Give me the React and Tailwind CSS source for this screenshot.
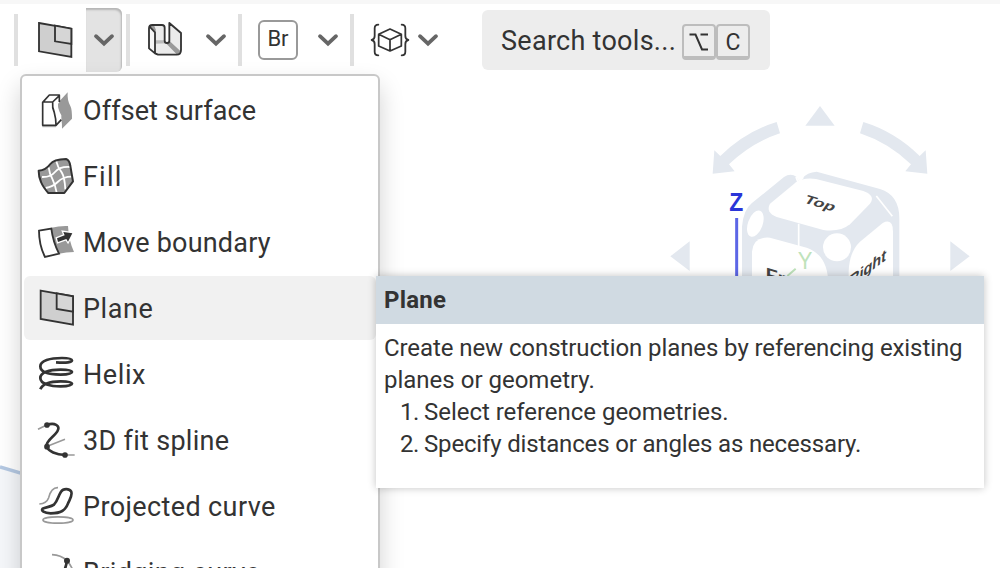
import React from "react";

const INK = "#333333";

function Chevron() {
  return (
    <svg className="h-5 w-6 shrink-0" viewBox="0 0 24 20" fill="none">
      <path d="M4 6.2 L12 13.6 L20 6.2" stroke="#666" strokeWidth="3.8" strokeLinecap="round" strokeLinejoin="miter" />
    </svg>
  );
}

function Divider() {
  return <div className="h-[52px] w-1 shrink-0 bg-[#e0e0e0]" />;
}

function PlaneIcon({ className, viewBox }) {
  return (
    <svg className={className} viewBox={viewBox} stroke={INK} strokeWidth="5.5">
      <path d="M117 69 L214 86 V171 L117 154 Z" fill="#cfcfcf" />
      <path d="M165 77 V124 L214 132 V86 Z" fill="#d6d6d6" />
    </svg>
  );
}

function ExtrudeIcon() {
  return (
    <svg className="h-10 w-9" viewBox="441 60 108 120" strokeLinejoin="round">
      <path d="M447 79 L465 98 V161 L447 145 Z" fill="#f5f5f5" />
      <path d="M452 76 H494 V122 Q494 129 501 129 Q508 129 508 122 V70 L543 99 V150 Q543 164 530 164 H470 Q465 162 465 155 V98 Z" fill="#ebebeb" />
      <path d="M449 76 L467 97 L467 88 L462 76 Z" fill="#999" />
      <path d="M467 121 H494 Q495 128 501 130 L467 131 Z" fill="#bbb" />
      <path d="M497 129 H508 V122 L541 153 Q538 162 530 163 Z" fill="#999" />
      <path
        d="M447 85 Q447 75 457 75 H486 Q494 75 494 83 V122 Q494 129 501 129 Q508 129 508 122 V69 L543 99 V150 Q543 164 530 164 H474 L465 160 L447 145 Z M449 80 L465 97 V158"
        fill="none" stroke={INK} strokeWidth="5.5"
      />
    </svg>
  );
}

function BracedCubeIcon() {
  return (
    <svg className="h-10 w-10" viewBox="420 60 120 120" fill="none" stroke={INK} strokeLinejoin="round" strokeLinecap="round">
      <path d="M445 74 Q434 74 434 85 V108 Q434 118 425 120 Q434 122 434 132 V155 Q434 166 445 166" strokeWidth="5.4" />
      <path d="M515 74 Q526 74 526 85 V108 Q526 118 535 120 Q526 122 526 132 V155 Q526 166 515 166" strokeWidth="5.4" />
      <path d="M480 87 L514 103 V138 L480 153 L446 138 V103 Z M446 103 L480 119 L514 103 M480 119 V153" strokeWidth="5.2" />
    </svg>
  );
}

const ICON = "h-12 w-10 shrink-0";

function OffsetSurfaceIcon() {
  return (
    <svg className={ICON} viewBox="48 18 120 144" fill="none" strokeLinejoin="round">
      <path d="M143 37 Q141 62 152 80 Q156 88 156 116 L126 146 Q127 118 118 100 Q112 88 114 68 Z" fill="#999" />
      <path d="M68 67 L88 45 H118 V66 L114 72 Q113 88 124 106 V119 L108 136 H68 Z" fill="#fff" />
      <path d="M118 66 V45 H88 L68 67 V136 H108 L124 119 M68 66 H98 L118 47 M98 66 Q96 82 103 98 Q108 115 108 136" stroke={INK} strokeWidth="5" />
      <path d="M67 140 H108" stroke="#999" strokeWidth="3" />
    </svg>
  );
}

function FillIcon() {
  return (
    <svg className={ICON} viewBox="48 216 120 144" fill="none" strokeLinejoin="round">
      <path d="M56 272 Q77 271 91 252 Q101 238 138 237 Q149 241 151 258 L159 304 L133 339 H85 Q69 321 63 306 Q56 290 56 272 Z" fill="#999" />
      <path d="M86 262 Q88 280 98 299 Q106 316 110 338 M109 244 Q113 262 125 277 Q134 292 136 328 M66 291 Q92 292 105 276 Q119 259 150 261 M77 324 Q99 320 113 306 Q129 290 155 290" stroke="#fff" strokeWidth="5.5" />
      <path d="M56 272 Q77 271 91 252 Q101 238 138 237 Q149 241 151 258 L159 304 L133 339 H85 Q69 321 63 306 Q56 290 56 272 Z" stroke={INK} strokeWidth="6" />
    </svg>
  );
}

function MoveBoundaryIcon() {
  return (
    <svg className={ICON} viewBox="48 24 120 144" fill="none" strokeLinejoin="miter">
      <path d="M95 53 Q118 47 144 48 Q146 91 162 126 Q138 127 117 131 Q99 95 95 53 Z" fill="#999" />
      <path d="M57 62 L94 56 Q99 96 117 131 L75 141 Q57 105 57 62 Z" fill="#fff" stroke={INK} strokeWidth="5.5" />
      <path d="M111 85 L134 76 L130 66 L157 70 L144 95 L139 87 L114 96 Z" fill={INK} stroke="#fff" strokeWidth="8" />
      <path d="M111 85 L134 76 L130 66 L157 70 L144 95 L139 87 L114 96 Z" fill={INK} />
    </svg>
  );
}

function HelixIcon() {
  return (
    <svg className={ICON} viewBox="48 30 120 144" fill="none" stroke={INK} strokeWidth="8.2" strokeLinejoin="round">
      <path d="M108 67 Q156 70 156 61 Q155 54 126 54 C90 54 61 62 61 79 C61 98 92 104 122 104 Q156 103 156 96 Q155 89 122 89 C86 89 61 98 61 114 C61 132 92 139 122 139 Q156 138 156 131 Q155 124 122 124 C88 124 67 133 61 148" />
    </svg>
  );
}

function SplineIcon() {
  return (
    <svg className={ICON} viewBox="48 228 120 144" fill="none">
      <path d="M54 268 L80 255 M82 319 L135 298 M135 345 H164" stroke="#999" strokeWidth="4.8" />
      <path d="M80 255 C104 246 121 257 113 272 C106 288 78 300 79 320 C86 334 108 344 135 345" stroke={INK} strokeWidth="7.8" />
      <circle cx="81" cy="255" r="8.5" fill={INK} />
      <circle cx="81" cy="320" r="8.5" fill={INK} />
      <circle cx="135" cy="345" r="8.5" fill={INK} />
    </svg>
  );
}

function ProjectedCurveIcon() {
  return (
    <svg className={ICON} viewBox="108 96 120 144" fill="none">
      <path d="M118 162 Q140 160 146 143 Q154 112 174 113" stroke="#999" strokeWidth="5" />
      <ellipse cx="174" cy="210" rx="45" ry="9.5" stroke="#999" strokeWidth="5" />
      <path d="M183 125 C190 115 207 115 213 124 C219 133 211 145 205 158 C196 182 183 190 152 190 C132 189 122 182 128 176 C136 171 153 171 162 164 C173 153 175 137 183 125 Z" stroke={INK} strokeWidth="8" />
    </svg>
  );
}

function BridgingCurveIcon() {
  return (
    <svg className={ICON} viewBox="108 294 120 144" fill="none">
      <path d="M156 314 Q183 315 200 331 Q211 343 217 357" stroke="#999" strokeWidth="5" />
      <path d="M200 332 Q200 358 178 380" stroke={INK} strokeWidth="8" />
      <circle cx="201" cy="332" r="9" fill={INK} />
    </svg>
  );
}

const ITEMS = [
  { label: "Offset surface", Icon: OffsetSurfaceIcon, tracking: "tracking-[0.1px]" },
  { label: "Fill", Icon: FillIcon, tracking: "tracking-[1.2px]" },
  { label: "Move boundary", Icon: MoveBoundaryIcon, tracking: "tracking-[0.2px]" },
  { label: "Plane", Icon: null, active: true, tracking: "tracking-[0.55px]" },
  { label: "Helix", Icon: HelixIcon, tracking: "tracking-[0.6px]" },
  { label: "3D fit spline", Icon: SplineIcon, tracking: "tracking-[0.3px]" },
  { label: "Projected curve", Icon: ProjectedCurveIcon, tracking: "tracking-[0.38px]" },
  { label: "Bridging curve", Icon: BridgingCurveIcon, tracking: "tracking-[0.38px]" },
];

function MenuItem({ label, Icon, active, tracking }) {
  return (
    <li className={`flex h-16 shrink-0 items-center rounded-md pl-3 ${active ? "bg-[#f1f1f1]" : ""}`}>
      {Icon ? <Icon /> : <PlaneIcon className={ICON} viewBox="103 49 120 144" />}
      <span className={`ml-[7px] whitespace-nowrap pt-[2px] text-[27px] leading-none ${tracking}`}>{label}</span>
    </li>
  );
}

function ViewCube() {
  const tint = "#e3e8ef";
  return (
    <svg className="absolute left-[660px] top-[95px] h-[190px] w-[320px]" viewBox="0 0 960 570" fill="none">
      <g fill={tint}>
        <path d="M480 33 L524 92 H436 Z" />
        <path d="M31 484 L89 439 V528 Z" />
        <path d="M929 484 L871 439 V528 Z" />
        <path d="M350 81 L360 115 Q275 143 207 208 L224 229 L158 236 L163 166 L181 183 Q255 110 350 81 Z" />
        <path d="M610 81 L600 115 Q685 143 753 208 L736 229 L802 236 L797 166 L779 183 Q705 110 610 81 Z" />
        <path d="M246 570 V395 Q250 345 275 325 L372 246 Q392 233 410 246 L414 257 L428 250 Q440 232 470 230 L660 282 Q718 300 718 370 V570 Z" />
      </g>
      <path d="M408 246 L414 262 L430 247" stroke="#fff" strokeWidth="5" />
      <g fill="#fff">
        <path d="M408 262 Q430 247 468 252 L610 288 Q648 302 630 326 L570 388 Q540 412 490 405 L350 366 Q316 352 330 326 Z" />
        <ellipse cx="286" cy="386" rx="22" ry="41" transform="rotate(20 286 386)" />
        <circle cx="531" cy="457" r="42" />
        <path d="M276 570 V470 Q280 424 330 428 L440 458 Q505 480 505 570 Z" />
        <path d="M566 570 V530 Q568 470 600 440 L668 384 Q699 368 699 410 V570 Z" />
      </g>
      <path d="M416 386 V455 M649 303 L697 364" stroke="#fff" strokeWidth="5" />
      <path d="M382 543 L407 521" stroke="#bfe3bb" strokeWidth="6" />
      <g fontFamily="Liberation Sans, sans-serif">
        <text transform="matrix(1.14 0.34 -0.5 0.7 428 322)" fontSize="45" fontWeight="700" fill="#444">Top</text>
        <text transform="matrix(1.1 0.32 0 1 317 554)" fontSize="54" fontWeight="700" fill="#444">Front</text>
        <text transform="matrix(0.86 -0.64 -0.1 1 565 579)" fontSize="51" fontWeight="700" fill="#444">Right</text>
        <text x="413" y="523" fontSize="72" fill="#bfe3bb" textLength="44" lengthAdjust="spacingAndGlyphs">Y</text>
        <text x="208" y="348" fontSize="80" fontWeight="700" fill="#2a35d8" textLength="42" lengthAdjust="spacingAndGlyphs">Z</text>
      </g>
      <path d="M230 369 V570" stroke="#5c66e6" strokeWidth="9" />
    </svg>
  );
}

function Key({ children }) {
  return (
    <kbd className="flex h-9 w-[34px] items-center justify-center rounded-[4px] border-2 border-b-4 border-[#bdbdbd] pt-[2px] font-[Roboto,sans-serif] text-[23px] leading-none">
      {children}
    </kbd>
  );
}

export default function App() {
  return (
    <main className="relative flex h-[568px] w-[1000px] flex-col overflow-hidden bg-white font-[Roboto,sans-serif] text-[#333]">
      <div className="h-1 shrink-0 bg-[#f7f7f7]" />
      <header className="flex h-[72px] shrink-0 items-center pl-[14px]">
        <Divider />
        <button className="ml-[18px] flex h-16 w-[50px] items-center">
          <PlaneIcon className="h-10 w-[38px]" viewBox="108 60 114 120" />
        </button>
        <button className="flex h-16 w-9 items-center justify-center rounded-r-md bg-[#e3e3e3] shadow-[inset_-1px_2px_2px_#b5b5b5]">
          <Chevron />
        </button>
        <div className="ml-1 flex items-center"><Divider /></div>
        <button className="ml-[17px] flex w-[57px] items-center"><ExtrudeIcon /></button>
        <Chevron />
        <div className="ml-[10px] flex items-center"><Divider /></div>
        <button className="ml-4 flex h-10 w-10 items-center justify-center rounded-md border-2 border-[#999] text-[22px] leading-none">
          <span className="-mt-[2px]">Br</span>
        </button>
        <div className="ml-[18px] flex items-center"><Chevron /></div>
        <div className="ml-[10px] flex items-center"><Divider /></div>
        <button className="ml-4 flex w-[46px] items-center"><BracedCubeIcon /></button>
        <Chevron />
        <div className="ml-[42px] flex h-[60px] w-[288px] items-center rounded-md bg-[#ededed] pl-[19px]">
          <span className="w-[181px] whitespace-nowrap pt-[2px] text-[27px] leading-none tracking-[0.28px]">Search tools...</span>
          <div className="mt-1 flex">
            <Key>
              <svg className="h-[18px] w-5" viewBox="0 0 20 18" fill="none" stroke={INK} strokeWidth="2">
                <path d="M0.5 1.5 H6.5 L13 16.5 H19 M11.5 1.5 H19" />
              </svg>
            </Key>
            <Key>C</Key>
          </div>
        </div>
      </header>

      <section className="relative flex-1">
        <svg className="h-full w-6" viewBox="0 76 24 492" preserveAspectRatio="none">
          <path d="M0 467 L24 474 V568 H0 Z" fill="#f5f7fa" />
          <path d="M0 467 L24 474" stroke="#b4c8e2" strokeWidth="3.4" />
        </svg>
      </section>
      <ViewCube />

      <ul className="absolute left-[20px] top-[74px] flex h-[560px] w-[360px] flex-col gap-[2px] rounded-md border-2 border-[#c8c8c8] bg-white p-[2px] shadow-[0_12px_24px_rgba(0,0,0,0.18)]">
        {ITEMS.map((item) => (
          <MenuItem key={item.label} {...item} />
        ))}
      </ul>

      <aside className="absolute left-[376px] top-[276px] h-[212px] w-[608px] bg-white shadow-[0_0_8px_rgba(0,0,0,0.24)]">
        <h2 className="flex h-12 items-center bg-[#d0dae2] px-2 text-2xl font-bold tracking-[0.2px]">Plane</h2>
        <div className="px-2 pt-2 text-2xl leading-8">
          <p className="whitespace-nowrap tracking-[-0.085px]">Create new construction planes by referencing existing</p>
          <p>planes or geometry.</p>
          <ol className="pl-4">
            <li className="tracking-[-0.03px]"><span className="tracking-[-0.6px]">1. </span>Select reference geometries.</li>
            <li className="tracking-[-0.16px]"><span className="tracking-[-0.6px]">2. </span>Specify distances or angles as necessary.</li>
          </ol>
        </div>
      </aside>
    </main>
  );
}
